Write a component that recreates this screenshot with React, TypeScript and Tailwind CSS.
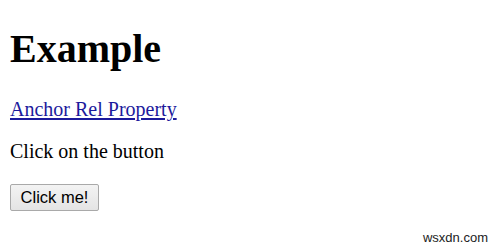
import React from 'react';

export default function App() {
  return (
    <div className="relative w-[500px] h-[249px] bg-white overflow-hidden">
      <div className="flex flex-col items-start px-[10px] pt-[27px] font-['Liberation_Serif',serif] text-black">
        <h1 className="text-[40px] leading-[44px] font-bold">Example</h1>
        <p className="mt-[27px] text-[20px] leading-[22px]">
          <a href="#" className="text-[#1c1a9c] underline underline-offset-[2px]">Anchor Rel Property</a>
        </p>
        <p className="mt-[20px] text-[20px] leading-[22px]">Click on the button</p>
        <button className="mt-[22px] w-[89px] h-[27px] rounded-[2px] border border-[#a9a9a9] bg-gradient-to-b from-[#f3f3f3] to-[#e4e4e4] font-['Liberation_Sans',Arial,sans-serif] text-[16.5px] leading-none text-black">
          Click me!
        </button>
      </div>
      <span className="absolute right-[12px] bottom-[4px] font-['Liberation_Sans',Arial,sans-serif] text-[13px] leading-[15px] text-[#222]">
        wsxdn.com
      </span>
    </div>
  );
}
